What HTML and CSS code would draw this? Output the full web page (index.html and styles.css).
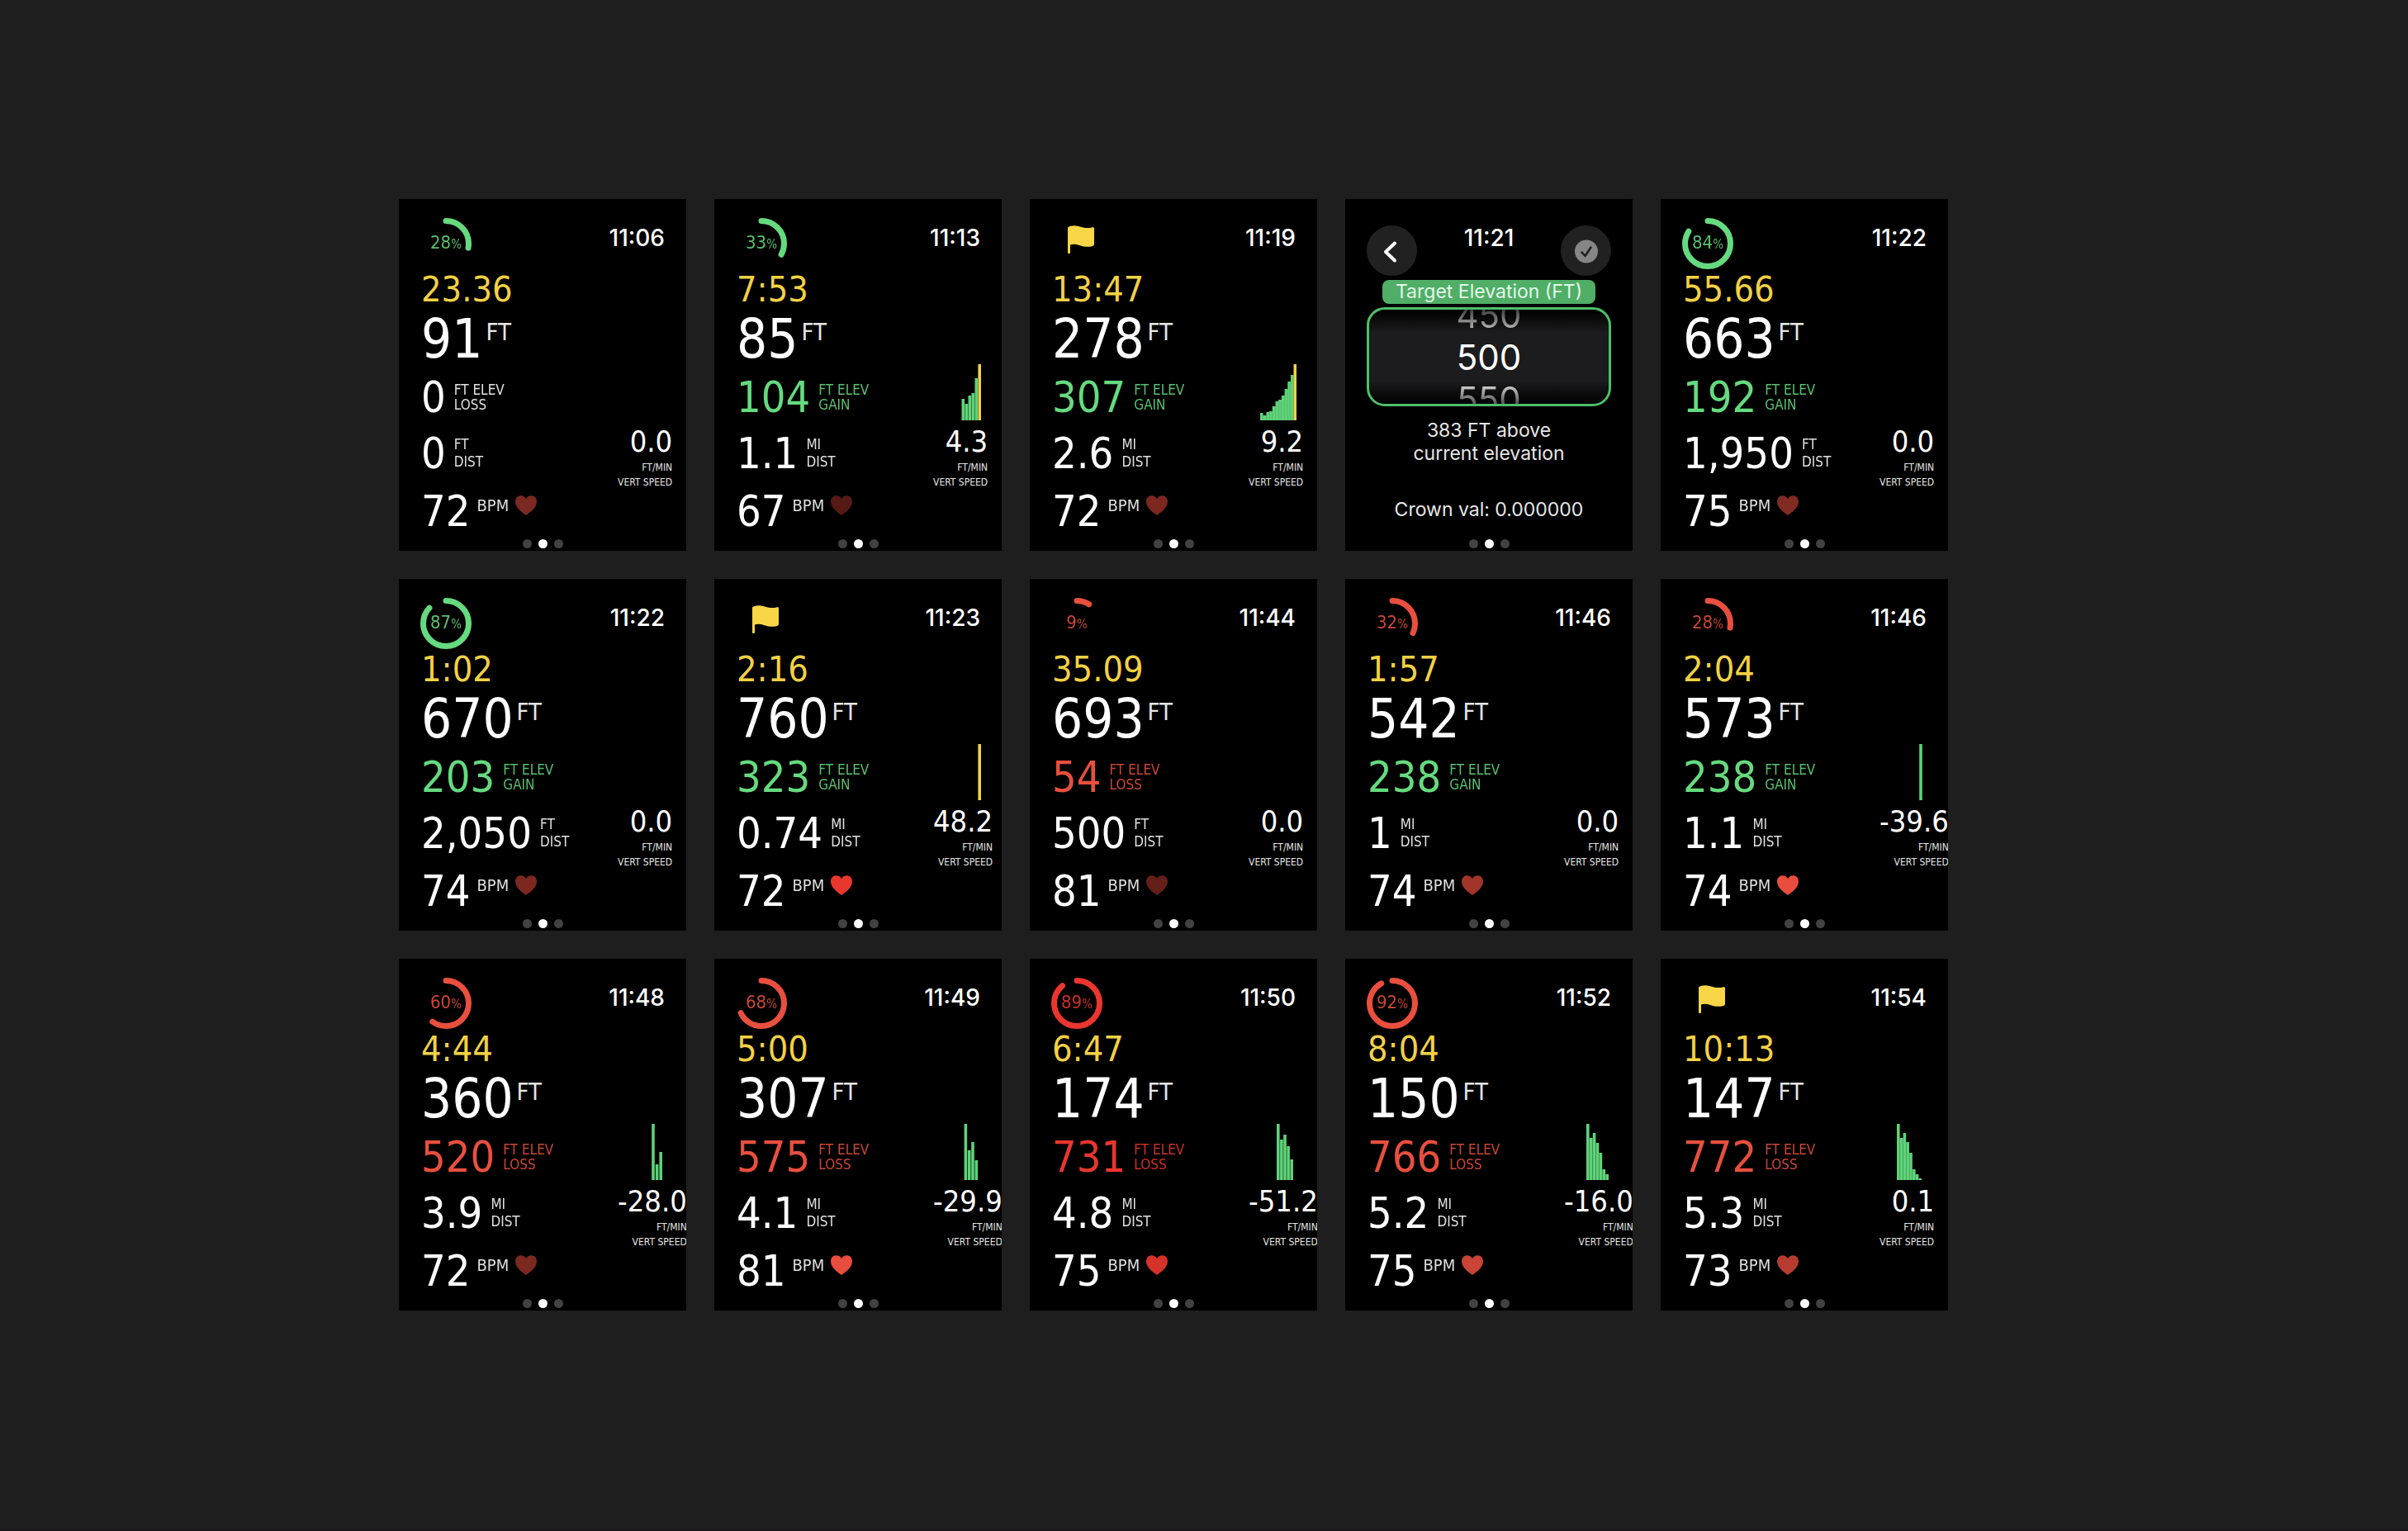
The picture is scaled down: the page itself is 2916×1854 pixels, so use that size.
FILE: index.html
```html
<!DOCTYPE html>
<html lang="en">
<head>
<meta charset="utf-8">
<title>Hike watch screens</title>
<link rel="stylesheet" href="styles.css">
</head>
<body>
<svg class="defs" aria-hidden="true">
  <symbol id="heart" viewBox="0 0 26 24"><path d="M13 24C10 21.800 0 15.500 0 7.500C0 3 3 .3 6.700.3C9.500.3 11.900 1.700 13 4.100C14.100 1.700 16.500.3 19.300.3C23 .3 26 3 26 7.500C26 15.500 16 21.800 13 24Z"/></symbol>
  <symbol id="flag" viewBox="0 0 32 34"><path d="M0 33V2.500C3 0 8-.4 13 .9C19 2.600 24 4 30 2.200C31 2 32 2.300 32 3.500V22.500C32 24 31 24.700 29.500 25.200C24 26.600 19 25.600 14 23.900C10 22.600 6 22.400 3 23.400V33C3 34.300 0 34.300 0 33Z"/></symbol>
</svg>
<main class="board">

<article class="watch">
  <header class="top"><div class="ring green"><svg viewBox="0 0 62 62"><circle cx="31" cy="31" r="27.500" pathLength="100" stroke-dasharray="28 100"/></svg><span>28<small>%</small></span></div><time>11:06</time></header>
  <div class="body"><div class="stats">
    <p class="elapsed">23.36</p>
    <p class="alt">91<sup>FT</sup></p>
    <p class="row"><b>0</b><span class="tight">FT ELEV<br>LOSS</span></p>
    <p class="row"><b>0</b><span>FT<br>DIST</span></p>
    <p class="row bpm"><b>72</b><span>BPM</span><svg fill="#7a2a22"><use href="#heart"/></svg></p>
  </div><div class="speed"><svg class="chart"></svg><p>0.0</p><small>FT/MIN<br>VERT SPEED</small></div></div>
  <footer class="dots"><i></i><i class="on"></i><i></i></footer>
</article>

<article class="watch">
  <header class="top"><div class="ring green"><svg viewBox="0 0 62 62"><circle cx="31" cy="31" r="27.500" pathLength="100" stroke-dasharray="33 100"/></svg><span>33<small>%</small></span></div><time>11:13</time></header>
  <div class="body"><div class="stats">
    <p class="elapsed">7:53</p>
    <p class="alt">85<sup>FT</sup></p>
    <p class="row green"><b>104</b><span class="tight">FT ELEV<br>GAIN</span></p>
    <p class="row"><b>1.1</b><span>MI<br>DIST</span></p>
    <p class="row bpm"><b>67</b><span>BPM</span><svg fill="#551a16"><use href="#heart"/></svg></p>
  </div><div class="speed"><svg class="chart"><path d="M36.300 68v-26M40.300 68v-20M44.300 68v-30M48.300 68v-33M52.300 68v-51"/><path class="peak" d="M56.200 68v-68"/></svg><p>4.3</p><small>FT/MIN<br>VERT SPEED</small></div></div>
  <footer class="dots"><i></i><i class="on"></i><i></i></footer>
</article>

<article class="watch">
  <header class="top"><div class="flag"><svg><use href="#flag"/></svg></div><time>11:19</time></header>
  <div class="body"><div class="stats">
    <p class="elapsed">13:47</p>
    <p class="alt">278<sup>FT</sup></p>
    <p class="row green"><b>307</b><span class="tight">FT ELEV<br>GAIN</span></p>
    <p class="row"><b>2.6</b><span>MI<br>DIST</span></p>
    <p class="row bpm"><b>72</b><span>BPM</span><svg fill="#7c2820"><use href="#heart"/></svg></p>
  </div><div class="speed"><svg class="chart"><path d="M15.800 68v-9M19.500 68v-6M23.200 68v-10M26.900 68v-11M30.600 68v-17M34.300 68v-23M38 68v-25M41.700 68v-30M45.400 68v-38M49.100 68v-47M52.800 68v-55"/><path class="peak" d="M56.300 68v-68"/></svg><p>9.2</p><small>FT/MIN<br>VERT SPEED</small></div></div>
  <footer class="dots"><i></i><i class="on"></i><i></i></footer>
</article>

<article class="watch picker">
  <header class="nav">
    <button type="button" aria-label="Back"><svg width="61" height="61" viewBox="0 0 61 61"><path d="M34 21.500L23 32L34 42.500" fill="none" stroke="#fff" stroke-width="4" stroke-linecap="round" stroke-linejoin="round"/></svg></button>
    <time>11:21</time>
    <button type="button" aria-label="Confirm"><svg width="61" height="61" viewBox="0 0 61 61"><circle cx="31" cy="31.500" r="14" fill="#868686"/><path d="M25.500 32.500L29.500 37L36.500 26.500" fill="none" stroke="#212121" stroke-width="2.600" stroke-linecap="round" stroke-linejoin="round"/></svg></button>
  </header>
  <h2 id="target">Target Elevation (FT)</h2>
  <ul class="wheel" role="listbox" aria-labelledby="target"><li role="option">450</li><li role="option" aria-selected="true">500</li><li role="option">550</li></ul>
  <p class="note">383 FT above<br>current elevation</p>
  <p class="crown">Crown val: 0.000000</p>
  <footer class="dots"><i></i><i class="on"></i><i></i></footer>
</article>

<article class="watch">
  <header class="top"><div class="ring green"><svg viewBox="0 0 62 62"><circle cx="31" cy="31" r="27.500" pathLength="100" stroke-dasharray="84 100"/></svg><span>84<small>%</small></span></div><time>11:22</time></header>
  <div class="body"><div class="stats">
    <p class="elapsed">55.66</p>
    <p class="alt">663<sup>FT</sup></p>
    <p class="row green"><b>192</b><span class="tight">FT ELEV<br>GAIN</span></p>
    <p class="row"><b>1,950</b><span>FT<br>DIST</span></p>
    <p class="row bpm"><b>75</b><span>BPM</span><svg fill="#822b23"><use href="#heart"/></svg></p>
  </div><div class="speed"><svg class="chart"></svg><p>0.0</p><small>FT/MIN<br>VERT SPEED</small></div></div>
  <footer class="dots"><i></i><i class="on"></i><i></i></footer>
</article>

<article class="watch">
  <header class="top"><div class="ring green"><svg viewBox="0 0 62 62"><circle cx="31" cy="31" r="27.500" pathLength="100" stroke-dasharray="87 100"/></svg><span>87<small>%</small></span></div><time>11:22</time></header>
  <div class="body"><div class="stats">
    <p class="elapsed">1:02</p>
    <p class="alt">670<sup>FT</sup></p>
    <p class="row green"><b>203</b><span class="tight">FT ELEV<br>GAIN</span></p>
    <p class="row"><b>2,050</b><span>FT<br>DIST</span></p>
    <p class="row bpm"><b>74</b><span>BPM</span><svg fill="#7c2820"><use href="#heart"/></svg></p>
  </div><div class="speed"><svg class="chart"></svg><p>0.0</p><small>FT/MIN<br>VERT SPEED</small></div></div>
  <footer class="dots"><i></i><i class="on"></i><i></i></footer>
</article>

<article class="watch">
  <header class="top"><div class="flag"><svg><use href="#flag"/></svg></div><time>11:23</time></header>
  <div class="body"><div class="stats">
    <p class="elapsed">2:16</p>
    <p class="alt">760<sup>FT</sup></p>
    <p class="row green"><b>323</b><span class="tight">FT ELEV<br>GAIN</span></p>
    <p class="row"><b>0.74</b><span>MI<br>DIST</span></p>
    <p class="row bpm"><b>72</b><span>BPM</span><svg fill="#ea362d"><use href="#heart"/></svg></p>
  </div><div class="speed"><svg class="chart"><path class="peak" d="M56.200 68v-68"/></svg><p>48.2</p><small>FT/MIN<br>VERT SPEED</small></div></div>
  <footer class="dots"><i></i><i class="on"></i><i></i></footer>
</article>

<article class="watch">
  <header class="top"><div class="ring red"><svg viewBox="0 0 62 62"><circle cx="31" cy="31" r="27.500" pathLength="100" stroke-dasharray="9 100"/></svg><span>9<small>%</small></span></div><time>11:44</time></header>
  <div class="body"><div class="stats">
    <p class="elapsed">35.09</p>
    <p class="alt">693<sup>FT</sup></p>
    <p class="row red"><b>54</b><span class="tight">FT ELEV<br>LOSS</span></p>
    <p class="row"><b>500</b><span>FT<br>DIST</span></p>
    <p class="row bpm"><b>81</b><span>BPM</span><svg fill="#651f19"><use href="#heart"/></svg></p>
  </div><div class="speed"><svg class="chart"></svg><p>0.0</p><small>FT/MIN<br>VERT SPEED</small></div></div>
  <footer class="dots"><i></i><i class="on"></i><i></i></footer>
</article>

<article class="watch">
  <header class="top"><div class="ring red"><svg viewBox="0 0 62 62"><circle cx="31" cy="31" r="27.500" pathLength="100" stroke-dasharray="32 100"/></svg><span>32<small>%</small></span></div><time>11:46</time></header>
  <div class="body"><div class="stats">
    <p class="elapsed">1:57</p>
    <p class="alt">542<sup>FT</sup></p>
    <p class="row green"><b>238</b><span class="tight">FT ELEV<br>GAIN</span></p>
    <p class="row"><b>1</b><span>MI<br>DIST</span></p>
    <p class="row bpm"><b>74</b><span>BPM</span><svg fill="#a2352a"><use href="#heart"/></svg></p>
  </div><div class="speed"><svg class="chart"></svg><p>0.0</p><small>FT/MIN<br>VERT SPEED</small></div></div>
  <footer class="dots"><i></i><i class="on"></i><i></i></footer>
</article>

<article class="watch">
  <header class="top"><div class="ring red"><svg viewBox="0 0 62 62"><circle cx="31" cy="31" r="27.500" pathLength="100" stroke-dasharray="28 100"/></svg><span>28<small>%</small></span></div><time>11:46</time></header>
  <div class="body"><div class="stats">
    <p class="elapsed">2:04</p>
    <p class="alt">573<sup>FT</sup></p>
    <p class="row green"><b>238</b><span class="tight">FT ELEV<br>GAIN</span></p>
    <p class="row"><b>1.1</b><span>MI<br>DIST</span></p>
    <p class="row bpm"><b>74</b><span>BPM</span><svg fill="#e94d3d"><use href="#heart"/></svg></p>
  </div><div class="speed"><svg class="chart"><path d="M50 68v-68"/></svg><p>-39.6</p><small>FT/MIN<br>VERT SPEED</small></div></div>
  <footer class="dots"><i></i><i class="on"></i><i></i></footer>
</article>

<article class="watch">
  <header class="top"><div class="ring red"><svg viewBox="0 0 62 62"><circle cx="31" cy="31" r="27.500" pathLength="100" stroke-dasharray="60 100"/></svg><span>60<small>%</small></span></div><time>11:48</time></header>
  <div class="body"><div class="stats">
    <p class="elapsed">4:44</p>
    <p class="alt">360<sup>FT</sup></p>
    <p class="row red"><b>520</b><span class="tight">FT ELEV<br>LOSS</span></p>
    <p class="row"><b>3.9</b><span>MI<br>DIST</span></p>
    <p class="row bpm"><b>72</b><span>BPM</span><svg fill="#7c2820"><use href="#heart"/></svg></p>
  </div><div class="speed"><svg class="chart"><path d="M43 68v-68M47.600 68v-19M52.200 68v-34"/></svg><p>-28.0</p><small>FT/MIN<br>VERT SPEED</small></div></div>
  <footer class="dots"><i></i><i class="on"></i><i></i></footer>
</article>

<article class="watch">
  <header class="top"><div class="ring red"><svg viewBox="0 0 62 62"><circle cx="31" cy="31" r="27.500" pathLength="100" stroke-dasharray="68 100"/></svg><span>68<small>%</small></span></div><time>11:49</time></header>
  <div class="body"><div class="stats">
    <p class="elapsed">5:00</p>
    <p class="alt">307<sup>FT</sup></p>
    <p class="row red"><b>575</b><span class="tight">FT ELEV<br>LOSS</span></p>
    <p class="row"><b>4.1</b><span>MI<br>DIST</span></p>
    <p class="row bpm"><b>81</b><span>BPM</span><svg fill="#e94d3d"><use href="#heart"/></svg></p>
  </div><div class="speed"><svg class="chart"><path d="M39.400 68v-68M43.700 68v-36M48 68v-46M52.300 68v-24"/></svg><p>-29.9</p><small>FT/MIN<br>VERT SPEED</small></div></div>
  <footer class="dots"><i></i><i class="on"></i><i></i></footer>
</article>

<article class="watch">
  <header class="top"><div class="ring crimson"><svg viewBox="0 0 62 62"><circle cx="31" cy="31" r="27.500" pathLength="100" stroke-dasharray="89 100"/></svg><span>89<small>%</small></span></div><time>11:50</time></header>
  <div class="body"><div class="stats">
    <p class="elapsed">6:47</p>
    <p class="alt">174<sup>FT</sup></p>
    <p class="row crimson"><b>731</b><span class="tight">FT ELEV<br>LOSS</span></p>
    <p class="row"><b>4.8</b><span>MI<br>DIST</span></p>
    <p class="row bpm"><b>75</b><span>BPM</span><svg fill="#d5322a"><use href="#heart"/></svg></p>
  </div><div class="speed"><svg class="chart"><path d="M35.800 68v-68M39.900 68v-49M44 68v-55M48.100 68v-41M52.200 68v-25"/></svg><p>-51.2</p><small>FT/MIN<br>VERT SPEED</small></div></div>
  <footer class="dots"><i></i><i class="on"></i><i></i></footer>
</article>

<article class="watch">
  <header class="top"><div class="ring red"><svg viewBox="0 0 62 62"><circle cx="31" cy="31" r="27.500" pathLength="100" stroke-dasharray="92 100"/></svg><span>92<small>%</small></span></div><time>11:52</time></header>
  <div class="body"><div class="stats">
    <p class="elapsed">8:04</p>
    <p class="alt">150<sup>FT</sup></p>
    <p class="row red"><b>766</b><span class="tight">FT ELEV<br>LOSS</span></p>
    <p class="row"><b>5.2</b><span>MI<br>DIST</span></p>
    <p class="row bpm"><b>75</b><span>BPM</span><svg fill="#c74436"><use href="#heart"/></svg></p>
  </div><div class="speed"><svg class="chart"><path d="M28.800 68v-68M32.700 68v-51M36.600 68v-57M40.500 68v-45M44.400 68v-33M48.300 68v-13M52.200 68v-7"/></svg><p>-16.0</p><small>FT/MIN<br>VERT SPEED</small></div></div>
  <footer class="dots"><i></i><i class="on"></i><i></i></footer>
</article>

<article class="watch">
  <header class="top"><div class="flag"><svg><use href="#flag"/></svg></div><time>11:54</time></header>
  <div class="body"><div class="stats">
    <p class="elapsed">10:13</p>
    <p class="alt">147<sup>FT</sup></p>
    <p class="row red"><b>772</b><span class="tight">FT ELEV<br>LOSS</span></p>
    <p class="row"><b>5.3</b><span>MI<br>DIST</span></p>
    <p class="row bpm"><b>73</b><span>BPM</span><svg fill="#b63c30"><use href="#heart"/></svg></p>
  </div><div class="speed"><svg class="chart"><path d="M22.800 68v-68M26.600 68v-51M30.400 68v-57M34.200 68v-46M38 68v-33M41.800 68v-13M45.600 68v-7M49.400 68v-2"/></svg><p>0.1</p><small>FT/MIN<br>VERT SPEED</small></div></div>
  <footer class="dots"><i></i><i class="on"></i><i></i></footer>
</article>

</main>
</body>
</html>
```
FILE: styles.css
```css
* { box-sizing: border-box; margin: 0; padding: 0; }

body {
  min-height: 100vh;
  background: #1e1e1e;
  border-bottom: 2px solid #1b141b;
  color: #fff;
  font-family: "DejaVu Sans Condensed", "DejaVu Sans", sans-serif;
}

.defs { display: none; }

.board {
  display: grid;
  grid-template-columns: repeat(auto-fill, 348px);
  justify-content: center;
  gap: 34px;
  max-width: 1950px;
  margin: 0 auto;
  padding: 241px 74px 241px 0;
}

.watch {
  display: flex;
  flex-direction: column;
  padding: 22px 0 3px 26px;
  background: #000;
  overflow: hidden;
}

.green { color: #65da7e; }
.red { color: #e94f3e; }
.crimson { color: #ea362e; }

/* Progress and clock */
.top { display: flex; justify-content: space-between; padding-right: 26px; }
time { font: 500 28px/50px Inter, sans-serif; }

.ring { display: grid; width: 62px; height: 62px; place-items: center; }
.ring > * { grid-area: 1 / 1; }
.ring svg { width: 62px; height: 62px; transform: rotate(-90deg); }
.ring circle { fill: none; stroke: currentColor; stroke-width: 7; stroke-linecap: round; }
.ring span { font-size: 22px; line-height: 62px; opacity: .88; }
.ring small { font-size: 15px; }

.flag { width: 62px; height: 62px; padding: 10px 0 0 20px; }
.flag svg { display: block; width: 32px; height: 34px; fill: #f8d648; }

/* Readings */
.body { display: flex; }
.stats { flex: 0 0 239px; padding-left: 1px; white-space: nowrap; }
.elapsed { color: #f3d143; font-size: 43px; line-height: 50px; }
.alt { display: flex; gap: 4px; height: 72px; font-size: 65px; line-height: 72px; }
.alt sup { font-size: 29px; line-height: 54px; color: #e6e6e6; }
.row { display: flex; align-items: center; gap: 10px; height: 68px; }
.row b { font-size: 52px; font-weight: normal; line-height: 68px; }
.row span { font-size: 17px; line-height: 21px; opacity: .88; }
.row .tight { line-height: 18px; }
.bpm { align-items: flex-start; gap: 8px; height: 60px; margin-top: 6px; }
.bpm b { line-height: 60px; }
.bpm span { font-size: 20px; line-height: 46px; }
.bpm svg { width: 26px; height: 24px; margin-top: 11px; }

/* Vertical speed */
.speed { flex: none; width: max-content; padding-top: 116px; text-align: right; }
.chart { display: block; width: 58px; height: 68px; margin-bottom: 4px; fill: none; stroke: #5fd279; stroke-width: 3.600; }
.chart .peak { stroke: #f3d143; }
.speed p { font-size: 36px; line-height: 44px; }
.speed small { display: block; font-size: 12px; line-height: 18px; color: #e6e6e6; }

/* Page indicator */
.dots { display: flex; justify-content: center; gap: 8px; margin-top: auto; padding: 4px 26px 0 0; }
.dots i { width: 11px; height: 11px; border-radius: 50%; background: #424242; }
.dots .on { background: #fff; }

/* Target elevation picker */
.picker { align-items: center; padding-right: 26px; font-family: Inter, sans-serif; text-align: center; }
.nav { display: flex; align-self: stretch; justify-content: space-between; height: 76px; }
.nav button { width: 61px; height: 61px; margin-top: 10px; border: 0; border-radius: 50%; background: #212121; }
.nav svg { display: block; }
.picker h2 { padding: 0 16px; border-radius: 8px; background: #50ae66; color: #e3f8e8; font-size: 23px; font-weight: 400; line-height: 29px; }
.wheel {
  display: flex;
  flex-direction: column;
  align-items: center;
  justify-content: center;
  align-self: stretch;
  height: 120px;
  margin-top: 4px;
  border: 3px solid #50bd69;
  border-radius: 22px;
  background: linear-gradient(#000, #1c1c1e 25%, #1c1c1e 75%, #000);
  overflow: hidden;
  list-style: none;
}
.wheel li { flex: none; font-size: 42px; line-height: 51px; color: #b4b4b4; }
.wheel li:first-child { background: linear-gradient(#3a3a3a 35%, #c8c8c8 90%); background-clip: text; color: transparent; }
.wheel li:last-child { background: linear-gradient(#c8c8c8 20%, #3a3a3a 70%); background-clip: text; color: transparent; }
.wheel [aria-selected] { color: #fff; }
.note, .crown { color: #e6e6e6; font-size: 23px; line-height: 28px; }
.note { margin-top: 15px; }
.crown { margin-top: 40px; }
.picker .dots { padding-right: 0; }
```
